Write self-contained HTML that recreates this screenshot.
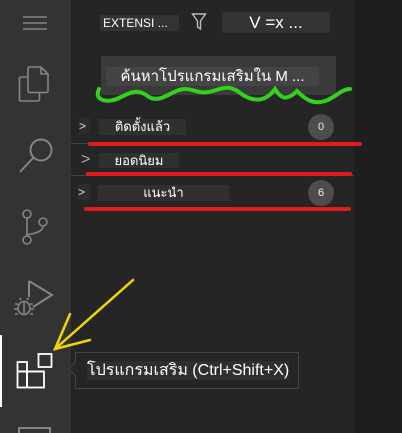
<!DOCTYPE html>
<html><head><meta charset="utf-8"><style>
body{margin:0;width:402px;height:433px;overflow:hidden;background:#1e1e1e;font-family:"Liberation Sans","Noto Sans CJK SC",sans-serif;position:relative}
.abs{position:absolute}
.act{left:0;top:0;width:71px;height:433px;background:#333333}
.side{left:71px;top:0;width:283px;height:433px;background:#252526}
.box{background:#333;color:#fff;font-size:12px;line-height:16px;white-space:nowrap}
.lbl{background:#303030;color:#fff;font-size:13px;line-height:16px;white-space:nowrap}
.chev{color:#ddd;font-size:12px;background:#2d2d2d}
.badge{width:26px;height:26px;border-radius:50%;background:#4d4d4d;color:#eee;font-size:11px;text-align:center;line-height:26px}
.red{height:4px;background:#e01b1b;border-radius:2px}
</style></head><body>
<div class="abs act"></div>
<div class="abs side"></div>
<svg class="abs" style="left:0;top:0" width="72" height="433" fill="none" stroke="#858585" stroke-width="1.6">
<path d="M23 17h24M23 23h24M23 29h24"/>
<path d="M30 67h11l7 7v17a1.5 1.5 0 0 1-1.5 1.5h-17a1.5 1.5 0 0 1-1.5-1.5V68.5A1.5 1.5 0 0 1 30 67zM41 67v7h7"/>
<path d="M28 77h-7a1.5 1.5 0 0 0-1.5 1.5v21a1.5 1.5 0 0 0 1.5 1.5h17a1.5 1.5 0 0 0 1.5-1.5V92"/>
<circle cx="41" cy="150" r="10.5" stroke-width="2"/><path d="M33.5 157.5L20 172" stroke-width="2"/>
<circle cx="27" cy="214" r="4"/><circle cx="27" cy="240" r="4"/><circle cx="43" cy="222" r="4"/><path d="M27 218v18M43 226c0 6-8 7-16 9"/>
<path d="M29 281v16M29 281l23 14-19 12" stroke-width="2"/>
<ellipse cx="24" cy="308" rx="6" ry="6.5"/><path d="M18 304h-3M30 304h3M18 309h-4M30 309h4M18 314h-3M30 314h3M24 301v13M21 300l-1.5-2M27 300l1.5-2"/>
<rect x="19" y="428" width="31" height="15" stroke-width="2"/>
</svg>
<div class="abs" style="left:0;top:335px;width:2px;height:72px;background:#fff"></div>
<svg class="abs" style="left:0;top:340px" width="72" height="60" fill="none" stroke="#fff" stroke-width="1.8">
<rect x="17.5" y="22" width="9.5" height="9.5"/><rect x="17.5" y="31.5" width="9.5" height="16"/><rect x="27" y="31.5" width="17" height="16"/><path d="M17.5 31.5h26.5"/>
<rect x="38.5" y="14" width="13" height="13"/>
</svg>
<div class="abs box" style="left:100px;top:15px;width:76px;height:16px;padding-left:3px">EXTENSI ...</div>
<svg class="abs" style="left:191px;top:12px" width="16" height="20" fill="none" stroke="#bbb" stroke-width="1.4"><path d="M1.5 2h13l-5 7v8l-3 -2V9z"/></svg>
<div class="abs box" style="left:222px;top:12px;width:108px;height:21px;font-size:17px;line-height:22px;text-align:center">V =x ...</div>
<div class="abs" style="left:101px;top:56px;width:235px;height:39px;background:#3a3a3a"></div>
<div class="abs" style="left:106px;top:67px;width:213px;height:19px;background:#444;color:#fff;font-size:15px;line-height:19px;text-align:center;white-space:nowrap">ค้นหาโปรแกรมเสริมใน M ...</div>
<svg class="abs" style="left:90px;top:84px" width="270" height="30" fill="none" stroke="#33d11d" stroke-width="4" stroke-linecap="round"><path d="M9 5c-6 12 10 15 22 8 12-6 18-8 28 0 12 7 24-8 36-8 10 0 14 6 28 2 12-4 18-6 30 4 10 6 22 8 32-6 6 10 12 12 22 2 8 8 16 14 28 10 10-3 16-12 25-12"/></svg>
<div class="abs chev" style="left:79px;top:118px;width:11px;height:16px;line-height:16px">&gt;</div>
<div class="abs lbl" style="left:99px;top:119px;width:87px;height:16px;text-align:center">ติดตั้งแล้ว</div>
<div class="abs badge" style="left:308px;top:114px">0</div>
<div class="abs" style="left:71px;top:143px;width:283px;height:1px;background:#444"></div>
<div class="abs red" style="left:88px;top:142px;width:274px"></div>
<div class="abs" style="left:81px;top:152px;color:#aaa;font-size:16px;line-height:16px">&gt;</div>
<div class="abs lbl" style="left:99px;top:153px;width:80px;height:15px;text-align:center">ยอดนิยม</div>
<div class="abs" style="left:71px;top:175px;width:283px;height:1px;background:#444"></div>
<div class="abs red" style="left:86px;top:172px;width:266px"></div>
<div class="abs chev" style="left:78px;top:184px;width:12px;height:16px;line-height:16px">&gt;</div>
<div class="abs lbl" style="left:98px;top:185px;width:131px;height:16px;text-align:center">แนะนำ</div>
<div class="abs badge" style="left:308px;top:180px">6</div>
<div class="abs red" style="left:84px;top:207px;width:267px"></div>
<div class="abs" style="left:75px;top:352px;width:222px;height:35px;background:#252526;border:1px solid #454545"></div>
<div class="abs" style="left:70px;top:364px;width:9px;height:9px;background:#252526;border-left:1px solid #454545;border-bottom:1px solid #454545;transform:rotate(45deg)"></div>
<div class="abs" style="left:87px;top:361px;height:19px;background:#2f2f2f;color:#fff;font-size:16px;line-height:19px;white-space:nowrap">โปรแกรมเสริม (Ctrl+Shift+X)</div>
<svg class="abs" style="left:0;top:0" width="402" height="433" fill="none" stroke="#f2d600" stroke-width="2.5" stroke-linecap="round"><path d="M133 280L55 349M70 314L55 349L90 340"/></svg>
</body></html>
